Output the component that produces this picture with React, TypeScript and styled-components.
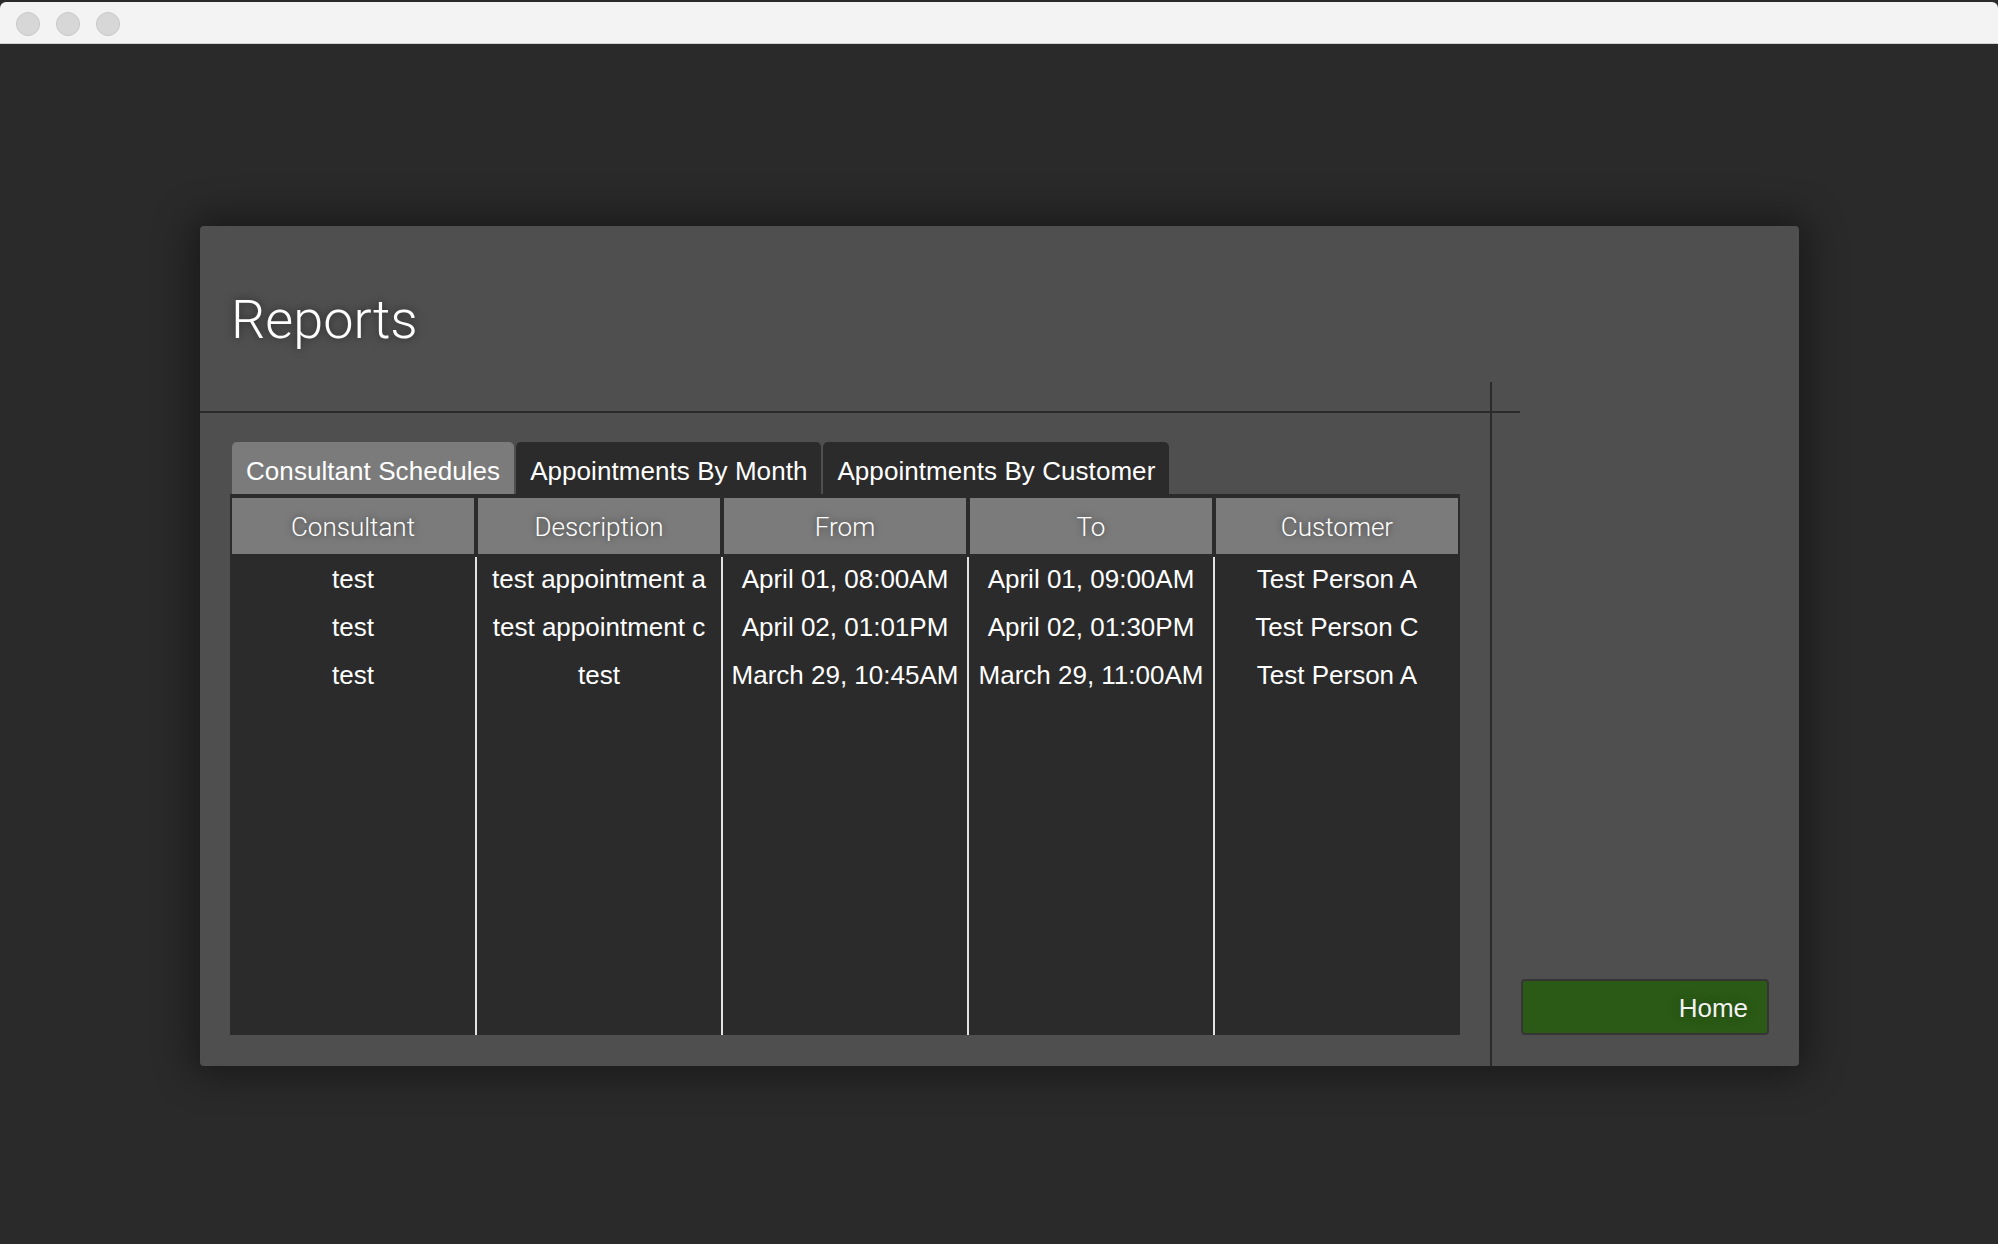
import React from "react";
import styled, { createGlobalStyle } from "styled-components";

const GlobalStyle = createGlobalStyle`
  html, body {
    margin: 0;
    padding: 0;
    background: #2a2a2a;
  }
  body {
    font-family: "Liberation Sans", Arial, sans-serif;
  }
  * { box-sizing: border-box; }
`;

const Page = styled.div`
  min-height: 100vh;
  display: flex;
  flex-direction: column;
  background: #2a2a2a;
`;

const TitleBar = styled.div`
  margin-top: 2px;
  height: 42px;
  background: #f3f3f3;
  border-bottom: 1px solid #d2d2d2;
  border-radius: 6px 6px 0 0;
  display: flex;
  align-items: flex-start;
  padding: 10px 0 0 16px;
  gap: 16px;
`;

const TrafficLight = styled.span`
  width: 24px;
  height: 24px;
  border-radius: 50%;
  background: #d7d7d7;
  border: 1px solid #c8c8c8;
`;

const Desktop = styled.div`
  flex: 1;
  padding: 182px 0 0 200px;
`;

const Panel = styled.div`
  width: 1599px;
  height: 840px;
  background: #4f4f4f;
  border-radius: 4px;
  box-shadow: 0 0 38px 8px rgba(0, 0, 0, 0.42);
  display: flex;
`;

const MainColumn = styled.div`
  width: 1290px;
  display: flex;
  flex-direction: column;
`;

const TitleArea = styled.div`
  height: 185px;
  padding: 67px 0 0 31px;
`;

const Title = styled.h1`
  margin: 0;
  font-family: Roboto, "Liberation Sans", sans-serif;
  font-weight: 300;
  font-size: 54px;
  line-height: 1;
  color: #ffffff;
  text-shadow: 0 0 10px rgba(0, 0, 0, 0.55);
`;

const Rule = styled.div`
  height: 2px;
  width: 1320px;
  flex-shrink: 0;
  background: #2b2b2b;
`;

const TabsSection = styled.div`
  flex: 1;
  display: flex;
  flex-direction: column;
  padding: 29px 30px 31px 30px;
`;

const TabBar = styled.div`
  display: flex;
  gap: 2px;
  padding-left: 2px;
  height: 52px;
`;

const Tab = styled.div<{ $active?: boolean }>`
  height: 52px;
  padding: 7px 14px 0 14px;
  display: flex;
  align-items: center;
  border-radius: 5px 5px 0 0;
  background: ${(p) => (p.$active ? "#7b7b7b" : "#2b2b2b")};
  color: #ffffff;
  font-family: "Liberation Sans", Arial, sans-serif;
  font-size: 26px;
  letter-spacing: 0.06px;
  white-space: nowrap;
`;

const Table = styled.div`
  flex: 1;
  background: #2b2b2b;
  padding: 4px 2px 0 2px;
  display: grid;
  grid-template-columns: repeat(5, 242px);
  grid-template-rows: 56px 1fr;
  column-gap: 4px;
`;

const HeaderCell = styled.div`
  background: #7b7b7b;
  color: #ffffff;
  font-family: Roboto, "Liberation Sans", sans-serif;
  font-weight: 300;
  font-size: 26px;
  line-height: 58px;
  height: 56px;
  overflow: hidden;
  text-align: center;
  text-shadow: 0 0 7px rgba(0, 0, 0, 0.5);
`;

const BodyColumn = styled.div<{ $divider?: boolean }>`
  position: relative;
  display: flex;
  flex-direction: column;
  padding-top: 1px;
  &::before {
    content: "";
    display: ${(p) => (p.$divider ? "block" : "none")};
    position: absolute;
    left: -3px;
    top: 3px;
    bottom: 0;
    width: 2px;
    background: #e2e2e2;
  }
`;

const BodyCell = styled.div`
  height: 48px;
  line-height: 48px;
  text-align: center;
  color: #ffffff;
  font-family: "Liberation Sans", Arial, sans-serif;
  font-size: 26px;
  white-space: nowrap;
`;

const SideColumn = styled.div`
  flex: 1;
  margin-top: 156px;
  border-left: 2px solid #2b2b2b;
  display: flex;
  flex-direction: column;
  justify-content: flex-end;
  padding: 0 30px 31px 29px;
`;

const HomeButton = styled.button`
  height: 56px;
  width: 100%;
  background: #2a5a15;
  border: 2px solid #363636;
  border-radius: 4px;
  color: #f2f2f2;
  font-family: "Liberation Sans", Arial, sans-serif;
  font-size: 26px;
  text-align: right;
  padding: 2px 19px 0 0;
  text-shadow: 0 0 12px rgba(0, 0, 0, 0.25);
  cursor: pointer;
`;

const columns = ["Consultant", "Description", "From", "To", "Customer"];

const rows = [
  ["test", "test appointment a", "April 01, 08:00AM", "April 01, 09:00AM", "Test Person A"],
  ["test", "test appointment c", "April 02, 01:01PM", "April 02, 01:30PM", "Test Person C"],
  ["test", "test", "March 29, 10:45AM", "March 29, 11:00AM", "Test Person A"],
];

const tabs = ["Consultant Schedules", "Appointments By Month", "Appointments By Customer"];

export default function App() {
  return (
    <>
      <GlobalStyle />
      <Page>
        <TitleBar>
          <TrafficLight />
          <TrafficLight />
          <TrafficLight />
        </TitleBar>
        <Desktop>
          <Panel>
            <MainColumn>
              <TitleArea>
                <Title>Reports</Title>
              </TitleArea>
              <Rule />
              <TabsSection>
                <TabBar>
                  {tabs.map((t, i) => (
                    <Tab key={t} $active={i === 0}>
                      {t}
                    </Tab>
                  ))}
                </TabBar>
                <Table>
                  {columns.map((c) => (
                    <HeaderCell key={c}>{c}</HeaderCell>
                  ))}
                  {columns.map((c, ci) => (
                    <BodyColumn key={c} $divider={ci > 0}>
                      {rows.map((r, ri) => (
                        <BodyCell key={ri}>{r[ci]}</BodyCell>
                      ))}
                    </BodyColumn>
                  ))}
                </Table>
              </TabsSection>
            </MainColumn>
            <SideColumn>
              <HomeButton>Home</HomeButton>
            </SideColumn>
          </Panel>
        </Desktop>
      </Page>
    </>
  );
}
